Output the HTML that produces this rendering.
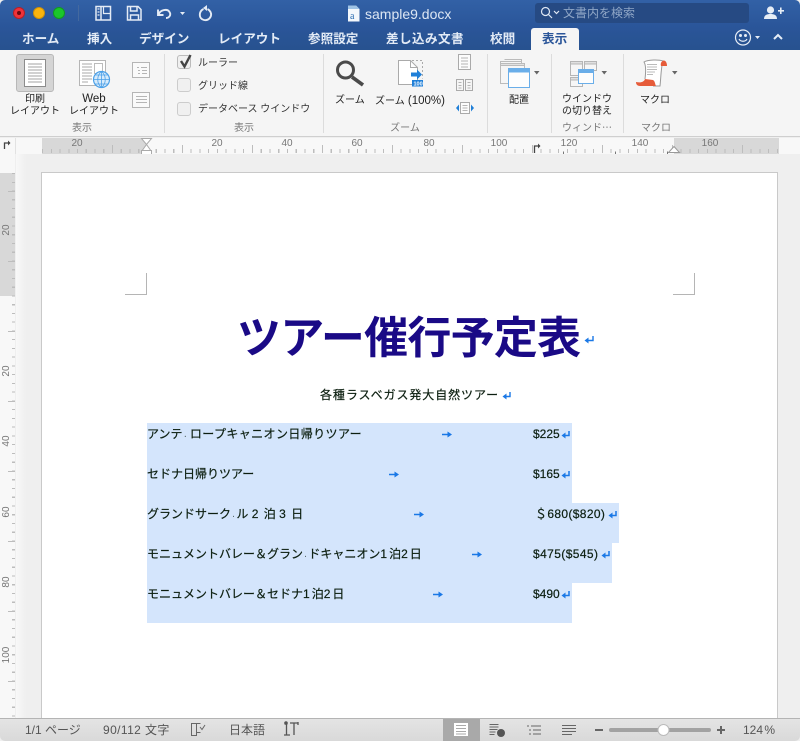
<!DOCTYPE html>
<html lang="ja"><head><meta charset="utf-8"><title>sample9.docx</title>
<style>
*{box-sizing:border-box}
html,body{margin:0;padding:0;width:800px;height:741px;overflow:hidden;background:#efefef}
body{position:relative;font-family:"Liberation Sans","Noto Sans CJK JP",sans-serif;color:#222}
.a{position:absolute;white-space:nowrap}
.tab{position:absolute;top:31px;height:16px;line-height:16px;font-size:12.6px;font-weight:bold;color:#e3ebf6;white-space:nowrap}
.rb{position:absolute;font-size:10px;line-height:12px;text-align:center;color:#222;white-space:nowrap;margin-top:2px}
.rb b{font-weight:normal;font-size:11.500px}
.gl{position:absolute;top:122px;font-size:10px;line-height:14px;color:#777;text-align:center;white-space:nowrap}
.sep{position:absolute;top:54px;width:1px;height:79px;background:#dcdcdc}
.rn{position:absolute;top:138px;font-size:10px;line-height:12px;color:#777;width:24px;text-align:center}
.row{position:absolute;left:147px;height:40px;background:#d4e5fc}
.t{position:absolute;left:147px;font-size:12px;line-height:14px;color:#0c1f10;white-space:nowrap;-webkit-text-stroke:.2px #0c1f10}
.t i{font-style:normal;letter-spacing:2px}
.m{position:absolute;font-size:12px;line-height:14px;color:#0c1f10;white-space:nowrap;-webkit-text-stroke:.2px #0c1f10}
svg{position:absolute;display:block;overflow:visible}
.st{position:absolute;top:723px;font-size:12px;line-height:15px;color:#555;white-space:nowrap}
</style></head><body>

<!-- Title + tabs -->
<div class="a" style="left:0;top:0;width:800px;height:50px;background:linear-gradient(#3261a6,#2a5599 55%,#27528f);border-radius:5px 5px 0 0"></div>
<div class="a" style="left:13px;top:7px;width:12px;height:12px;border-radius:50%;background:#f0323a;border:1px solid #b32028"></div>
<div class="a" style="left:17px;top:11px;width:4px;height:4px;border-radius:50%;background:#6a0a10"></div>
<div class="a" style="left:33px;top:7px;width:12px;height:12px;border-radius:50%;background:#fbb40e;border:1px solid #cf9208"></div>
<div class="a" style="left:53px;top:7px;width:12px;height:12px;border-radius:50%;background:#1bc62c;border:1px solid #139a20"></div>
<div class="a" style="left:78px;top:5px;width:1px;height:16px;background:#44699f"></div>

<svg style="left:0;top:0" width="800" height="50" fill="none" stroke="#e4ebf5" stroke-width="1.500">
<path d="M96 6.500h14.500v13.500H96zM101 6.500v13.500"/>
<path d="M103.500 6.500v7h7" stroke-width="1.200"/>
<path d="M97.500 9h2M97.500 12h2M97.500 15h2" stroke-width="1.200"/>
<path d="M127.500 6.500h10.500l3 3v10.500h-13.500z"/><path d="M130.500 7v4h6.500V7M130.500 20v-5h8v5" stroke-width="1.500"/>
<path d="M158 9.500v5.500h5.500M158.500 14.500c2-5 9-6 11-2.500 2 3-.5 6-3.500 6" stroke-width="1.900"/>
<path d="M180 12h5l-2.500 3z" fill="#e4ebf5" stroke="none"/>
<path d="M203.500 9c-5 2.500-5 10 .5 11 5 1 8.500-4 6.500-8-1-1.800-2-2.500-3-3" stroke-width="1.900"/>
<path d="M207 5v6l-4-3z" fill="#e4ebf5" stroke="none"/>
</svg>

<svg style="left:347px;top:5px" width="13" height="17"><path d="M1 .5h8l3.500 3.500v12.500h-11.500z" fill="#f4f8fc"/><path d="M1 .5h8l3.500 3.500h-11.500z" fill="#9fc3e5"/><text x="3" y="14" font-size="10" font-family="Liberation Serif" fill="#2b6cb0">a</text></svg>
<div class="a" style="left:365px;top:7px;font-size:14px;line-height:15px;color:#dce6f3">sample9.docx</div>

<div class="a" style="left:535px;top:3px;width:214px;height:20px;border-radius:3px;background:#264a83"></div>
<svg style="left:540px;top:6px" width="20" height="14" fill="none" stroke="#dfe8f4" stroke-width="1.200"><circle cx="5.500" cy="5.500" r="4"/><path d="M8.500 8.500l3.500 3.500"/><path d="M14 5l2.500 2.500L19 5"/></svg>
<div class="a" style="left:563px;top:6px;font-size:12px;line-height:15px;color:#8fa6c6">文書内を検索</div>
<svg style="left:764px;top:6px" width="20" height="14" fill="#e6edf6"><circle cx="6.500" cy="4" r="3.600"/><path d="M0 13c0-4 3-5 6.500-5s6.500 1 6.500 5z"/><path d="M14 4h2V1.500h1.600V4H20v1.600h-2.400V8H16V5.600h-2z"/></svg>

<div class="tab" style="left:22px">ホーム</div>
<div class="tab" style="left:87px">挿入</div>
<div class="tab" style="left:139px">デザイン</div>
<div class="tab" style="left:218px">レイアウト</div>
<div class="tab" style="left:308px">参照設定</div>
<div class="tab" style="left:386px;letter-spacing:.4px">差し込み文書</div>
<div class="tab" style="left:490px">校閲</div>
<div class="a" style="left:531px;top:28px;width:48px;height:23px;background:#f5f5f5;border-radius:3px 3px 0 0"></div>
<div class="tab" style="left:542px;color:#2a5599">表示</div>
<svg style="left:735px;top:29px" width="50" height="18" fill="none" stroke="#e6edf6" stroke-width="1.200"><circle cx="8" cy="8.500" r="7.500"/><circle cx="5.500" cy="6.500" r=".9" fill="#e6edf6"/><circle cx="10.500" cy="6.500" r=".9" fill="#e6edf6"/><path d="M4 10c1.500 3 6.500 3 8 0"/><path d="M20 7h5l-2.500 3z" fill="#e6edf6" stroke="none"/><path d="M39 10l4-4 4 4" stroke-width="2"/></svg>

<!-- Ribbon -->
<div class="a" style="left:0;top:50px;width:800px;height:87px;background:#f5f5f5;border-bottom:1px solid #cfcfcf"></div>
<div class="sep" style="left:164px"></div><div class="sep" style="left:323px"></div><div class="sep" style="left:487px"></div><div class="sep" style="left:551px"></div><div class="sep" style="left:623px"></div>

<div class="a" style="left:16px;top:54px;width:38px;height:38px;background:#d5d5d5;border:1px solid #b8b8b8;border-radius:3px"></div>
<svg style="left:0;top:50px" width="130" height="50" fill="none">
<path d="M24.500 9.500h21v27h-21z" fill="#fff" stroke="#8c8c8c"/>
<path d="M28 14h14M28 17h14M28 20h14M28 23h14M28 26h14M28 29h14M28 32h14" stroke="#a3a3a3"/>
<path d="M79.500 10.500h26v25h-26z" fill="#fff" stroke="#b5b5b5"/>
<path d="M82 14h10M82 17h10M82 20h10M82 23h10M82 26h10M82 29h10M82 32h6" stroke="#aaa"/><path d="M94.500 13.500h8v10h-8z" stroke="#bbb"/>
<circle cx="101.500" cy="29.500" r="8" fill="#d7ebfb" stroke="#4ba0e8" stroke-width="1.200"/>
<path d="M93.500 29.500h16M101.500 21.500v16M95 25h13M95 34h13M101.500 21.500c-5 4-5 12 0 16M101.500 21.500c5 4 5 12 0 16" stroke="#4ba0e8" stroke-width=".8"/>
</svg>
<div class="rb" style="left:10px;top:92px;width:50px;">印刷<br>レイアウト</div>
<div class="rb" style="left:68px;top:91px;width:52px;"><b>Web</b><br>レイアウト</div>
<div class="gl" style="left:62px;width:40px">表示</div>

<svg style="left:130px;top:60px" width="24" height="52" fill="none" stroke="#b5b5b5">
<path d="M2.500 2.500h17v15h-17zM2.500 32.500h17v15h-17z" fill="#fafafa"/>
<path d="M7 7.500h2M11 7.500h6M8 10.500h2M12 10.500h5M8 13.500h2M12 13.500h5M6 36.500h11M6 39.500h11M6 42.500h11"/>
</svg>

<div class="a" style="left:177px;top:55px;width:14px;height:14px;background:#f0f0f0;border:1px solid #bbb;border-radius:3px"></div>
<svg style="left:177px;top:52px" width="16" height="17" fill="none"><path d="M4 9l3.500 5.500L13.500 3" stroke="#444" stroke-width="2.400"/></svg>
<div class="a" style="left:177px;top:78px;width:14px;height:14px;background:#f0f0f0;border:1px solid #ccc;border-radius:3px"></div>
<div class="a" style="left:177px;top:102px;width:14px;height:14px;background:#f0f0f0;border:1px solid #ccc;border-radius:3px"></div>
<div class="rb" style="left:198px;top:56px;color:#333">ルーラー</div>
<div class="rb" style="left:198px;top:79px;color:#333">グリッド線</div>
<div class="rb" style="left:198px;top:102px;color:#333">データベース ウインドウ</div>
<div class="gl" style="left:224px;width:40px">表示</div>

<svg style="left:330px;top:50px" width="160" height="66" fill="none">
<circle cx="15.500" cy="20" r="8" stroke="#4a4a4a" stroke-width="3"/><path d="M22 27l11 8" stroke="#4a4a4a" stroke-width="3.600"/>
<path d="M68.500 10.500h12l7 7v17h-19z" fill="#fff" stroke="#aaa"/><path d="M80.500 10.500v7h7" stroke="#aaa"/><path d="M82 10.500h10.500v18" stroke="#aaa" stroke-dasharray="2 2"/>
<path d="M81 22.500h6v-3l5 5-5 5v-3h-6z" fill="#1f7fd8"/><rect x="82" y="30" width="11" height="6.500" fill="#1f7fd8"/>
<text x="83.500" y="35.500" font-size="5.500" font-weight="bold" fill="#fff" font-family="Liberation Sans">100</text>
<path d="M128.500 4.500h12v15h-12z" fill="#fcfcfc" stroke="#aaa"/><path d="M131 8h7M131 11h7M131 14h7M131 17h7" stroke="#b5b5b5"/>
<path d="M126.500 29.500h7v11h-7zM135.500 29.500h7v11h-7z" stroke="#aaa"/><path d="M128.500 32.500h3M128.500 35.500h3M128.500 38h3M137.500 32.500h3M137.500 35.500h3M137.500 38h3" stroke="#b5b5b5"/>
<path d="M130.500 52.500h9v11h-9z" fill="#fcfcfc" stroke="#aaa"/><path d="M132.500 55.500h5M132.500 58h5M132.500 60.500h5" stroke="#b5b5b5"/>
<path d="M126 58l3-3.500v7zM144 58l-3-3.500v7z" fill="#1f7fd8"/>
</svg>
<div class="rb" style="left:335px;top:93px">ズーム</div>
<div class="rb" style="left:375px;top:93px">ズーム<b> (100%)</b></div>
<div class="gl" style="left:385px;width:40px">ズーム</div>

<svg style="left:495px;top:55px" width="180" height="40" fill="none">
<path d="M9.500 4.500h17v4M5.500 8.500v-2h21" stroke="#bbb"/>
<path d="M5.500 8.500h24v20h-24z" fill="#f6f6f6" stroke="#bbb"/><path d="M5.500 8.500h24v2h-24z" fill="#e2e2e2" stroke="#bbb"/>
<path d="M13.500 13.500h21v19h-21z" fill="#fdfdfd" stroke="#6aaee9"/><path d="M14 14h20v3.500h-20z" fill="#6aaee9"/>
<path d="M39 16h5.500l-2.750 3.500z" fill="#666"/>
<path d="M75.500 6.500h12v14h-12zM89.500 6.500h12v9h-12zM75.500 22.500h12v9h-12z" fill="#f6f6f6" stroke="#b5b5b5"/>
<path d="M75.500 6.500h12v2.500h-12zM89.500 6.500h12v2.500h-12zM75.500 22.500h12v2.500h-12z" fill="#e0e0e0" stroke="#b5b5b5"/>
<path d="M83.500 14.500h15v14h-15z" fill="#fdfdfd" stroke="#6aaee9"/><path d="M84 15h14v3h-14z" fill="#6aaee9"/>
<path d="M106.500 16h5.500l-2.750 3.500z" fill="#666"/>
<path d="M150 24C151 16 151 10 149 7c4-2.500 15-2.500 19-1-2 6-2 16-3 25h-7" fill="#fff" stroke="#999"/>
<path d="M152 9.500h10M152 12h10M152 14.500h10M152 17h8M152 19.500h6" stroke="#bbb"/>
<path d="M141 27c5 1 8 0 9-3l8 1c2 1 2 4 3 6h-16c-3 0-4-2-4-4z" fill="#e65c3a"/>
<path d="M166 11c-1-3 1-5.500 3-5.500 2 .5 3 2.500 3 5.500z" fill="#e65c3a"/>
<path d="M177 16h5.500l-2.750 3.500z" fill="#666"/>
</svg>
<div class="rb" style="left:509px;top:93px">配置</div>
<div class="rb" style="left:556px;top:92px;width:62px;">ウインドウ<br>の切り替え</div>
<div class="rb" style="left:640px;top:93px">マクロ</div>
<div class="gl" style="left:562px;width:50px">ウィンド⋯</div>
<div class="gl" style="left:636px;width:40px">マクロ</div>

<!-- Horizontal ruler -->
<div class="a" style="left:0;top:138px;width:800px;height:16px;background:#f8f8f8"></div>
<div class="a" style="left:15px;top:138px;width:1px;height:16px;background:#e2e2e2"></div>
<div class="a" style="left:42px;top:138px;width:105px;height:16px;background:#d8d8d8"></div>
<div class="a" style="left:674px;top:138px;width:105px;height:16px;background:#d8d8d8"></div>
<div class="a" style="left:42px;top:149px;width:737px;height:4px;background:repeating-linear-gradient(90deg,#bdbdbd 0 1px,transparent 1px 8.75px)"></div>
<div class="a" style="left:112px;top:145px;width:667px;height:8px;background:repeating-linear-gradient(90deg,#bdbdbd 0 1px,transparent 1px 70px)"></div>
<div class="rn" style="left:65px">20</div><div class="rn" style="left:205px">20</div><div class="rn" style="left:275px">40</div><div class="rn" style="left:345px">60</div><div class="rn" style="left:417px">80</div><div class="rn" style="left:487px">100</div><div class="rn" style="left:557px">120</div><div class="rn" style="left:628px">140</div><div class="rn" style="left:698px">160</div>
<svg style="left:0;top:137px" width="800" height="20" fill="none">
<path d="M4.500 12V6h4" stroke="#444" stroke-width="1.300"/><path d="M8 3.500l2.500 2.500L8 8.500z" fill="#444"/>
<path d="M141.500 1.500h10l-5 6zM141.500 14.500l5-7 5 7" fill="#fff" stroke="#aaa"/><path d="M141.500 13.500h10v6h-10z" fill="#fff" stroke="#aaa"/>
<path d="M534.500 16V9h4" stroke="#444" stroke-width="1.300"/><path d="M538 6.500l2.500 2.500-2.500 2.500z" fill="#444"/>
<path d="M668.500 15.500l5.500-6 5.500 6z" fill="#fff" stroke="#999"/>
<path d="M563.500 14.500v3M615.500 14.500v3M667.500 14.500v3" stroke="#777"/>
</svg>

<!-- Vertical ruler -->
<div class="a" style="left:0;top:154px;width:15px;height:564px;background:#f8f8f8"></div>
<div class="a" style="left:0;top:173px;width:15px;height:123px;background:#d8d8d8"></div>
<div class="a" style="left:12px;top:173px;width:3px;height:545px;background:repeating-linear-gradient(180deg,#bdbdbd 0 1px,transparent 1px 8.750px)"></div>
<div class="a" style="left:8px;top:191px;width:7px;height:527px;background:repeating-linear-gradient(180deg,#bdbdbd 0 1px,transparent 1px 70px)"></div>
<svg style="left:0;top:154px" width="16" height="564"><g font-size="10" fill="#777" font-family="Liberation Sans" text-anchor="middle"><text transform="translate(9,76) rotate(-90)">20</text><text transform="translate(9,217) rotate(-90)">20</text><text transform="translate(9,287) rotate(-90)">40</text><text transform="translate(9,358) rotate(-90)">60</text><text transform="translate(9,428) rotate(-90)">80</text><text transform="translate(9,501) rotate(-90)">100</text></g></svg>

<!-- Page -->
<div class="a" style="left:16px;top:154px;width:784px;height:564px;background:linear-gradient(90deg,#f8f8f8,#efefef 10px)"></div>
<div class="a" style="left:41px;top:172px;width:737px;height:546px;background:#fff;border:1px solid #c9c9c9;border-bottom:0"></div>
<svg style="left:0;top:0" width="800" height="300" fill="none" stroke="#b5b5b5"><path d="M125 294.500h21.500V273M694.500 273v21.500H673"/></svg>

<div class="a" style="left:237px;top:312px;font-size:44px;line-height:54px;font-weight:bold;color:#1a0a86;letter-spacing:-.75px">ツアー催行予定表</div>
<svg style="left:0;top:0" width="800" height="741" fill="none" stroke="#1a78e6" stroke-width="1.400">
<path d="M593 336v4.500h-6"/><path d="M588.500 337.500v6l-4-3z" fill="#1a78e6" stroke="none"/>
<path d="M510 392v4.500h-4"/><path d="M506.500 393.500v6l-4-3z" fill="#1a78e6" stroke="none"/>
</svg>
<div class="m" style="left:320px;top:388px;letter-spacing:.92px">各種ラスベガス発大自然ツアー</div>

<div class="row" style="top:423px;width:425px"></div>
<div class="row" style="top:463px;width:425px"></div>
<div class="row" style="top:503px;width:472px"></div>
<div class="row" style="top:543px;width:465px"></div>
<div class="row" style="top:583px;width:425px"></div>

<div class="t" style="top:427px">アンテ<span style="font-size:6px"> · </span><span style="margin-left:2px;letter-spacing:.4px">ロープキャニオン日帰りツアー</span></div>
<div class="t" style="top:467px">セドナ日帰りツアー</div>
<div class="t" style="top:507px">グランドサーク<span style="font-size:6px"> · </span>ル <i>2</i> 泊 <i>3</i> 日</div>
<div class="t" style="top:547px">モニュメントバレー＆グラン<span style="font-size:6px"> · </span>ドキャニオン<i>1</i>泊<i>2</i>日</div>
<div class="t" style="top:587px">モニュメントバレー＆セドナ<i>1</i>泊<i>2</i>日</div>
<div class="m" style="left:533px;top:427px">$225</div>
<div class="m" style="left:533px;top:467px">$165</div>
<div class="m" style="left:535px;top:507px;letter-spacing:.35px">＄680($820)</div>
<div class="m" style="left:533px;top:547px;letter-spacing:.4px">$475($545)</div>
<div class="m" style="left:533px;top:587px">$490</div>

<svg style="left:0;top:0" width="800" height="741" fill="none" stroke="#1a78e6" stroke-width="1.500">
<path d="M442 434.500h6"/><path d="M447.500 431.500l4.500 3-4.500 3z" fill="#1a78e6" stroke="none"/>
<path d="M389 474.500h6"/><path d="M394.500 471.500l4.500 3-4.500 3z" fill="#1a78e6" stroke="none"/>
<path d="M414 514.500h6"/><path d="M419.500 511.500l4.500 3-4.500 3z" fill="#1a78e6" stroke="none"/>
<path d="M472 554.500h6"/><path d="M477.500 551.500l4.500 3-4.500 3z" fill="#1a78e6" stroke="none"/>
<path d="M433 594.500h6"/><path d="M438.500 591.500l4.500 3-4.500 3z" fill="#1a78e6" stroke="none"/>
<path d="M569 431v4.500h-4"/><path d="M565.500 432.500v6l-4-3z" fill="#1a78e6" stroke="none"/>
<path d="M569 471v4.500h-4"/><path d="M565.500 472.500v6l-4-3z" fill="#1a78e6" stroke="none"/>
<path d="M616 511v4.500h-4"/><path d="M612.500 512.500v6l-4-3z" fill="#1a78e6" stroke="none"/>
<path d="M609 551v4.500h-4"/><path d="M605.500 552.500v6l-4-3z" fill="#1a78e6" stroke="none"/>
<path d="M569 591v4.500h-4"/><path d="M565.500 592.500v6l-4-3z" fill="#1a78e6" stroke="none"/>
</svg>

<!-- Status bar -->
<div class="a" style="left:0;top:718px;width:800px;height:23px;background:linear-gradient(#e4e4e4,#d9d9d9);border-top:1px solid #b4b4b4;border-radius:0 0 5px 5px"></div>
<div class="st" style="left:25px">1/1 ページ</div>
<div class="st" style="left:103px;letter-spacing:.4px">90/112 文字</div>
<div class="st" style="left:229px">日本語</div>
<div class="a" style="left:443px;top:719px;width:37px;height:22px;background:#a9a9a9"></div>
<svg style="left:0;top:718px" width="800" height="23" fill="none" stroke="#666">
<path d="M191.500 5.500h5v12h-5zM196.500 5.500h4M196.500 14.500h4M200 9l2 2.500 3-4.500" stroke-width="1"/>
<path d="M284.500 6h3M286.500 6v11M290 5h8M294 5v12M284 17h6M298 4v3" stroke="#555" stroke-width="1.300"/><circle cx="286" cy="5" r="1.800" fill="#555" stroke="none"/>
<rect x="454" y="5" width="14" height="13" fill="#fff" stroke="none"/><path d="M456 7.500h10M456 10.500h10M456 13.500h10M456 16h10" stroke="#aaa"/>
<path d="M489.500 6.500h9M489.500 9h9M489.500 11.500h8M489.500 14h6M489.500 16.500h5" stroke="#666"/><circle cx="501" cy="15" r="4" fill="#555" stroke="none"/>
<path d="M527 8h2M531 8h10M529 12h2M533 12h8M529 16h2M533 16h8" stroke="#666"/>
<path d="M562 7.500h14M562 10.500h14M562 13.500h14M562 16.500h10" stroke="#666"/>
<path d="M595 12h8M717 12h8M721 8v8" stroke="#666" stroke-width="2"/>
<path d="M611 12h98" stroke="#a2a2a2" stroke-width="4" stroke-linecap="round"/>
<circle cx="663.500" cy="12" r="5.500" fill="#fff" stroke="#bbb"/>
</svg>
<div class="st" style="left:743px;color:#555;word-spacing:-2px">124 %</div>

</body></html>
